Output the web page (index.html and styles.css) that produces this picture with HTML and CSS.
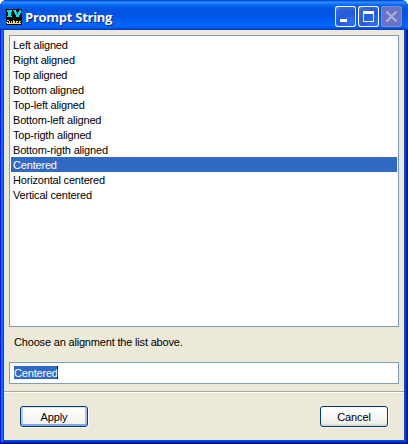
FILE: index.html
```html
<!DOCTYPE html>
<html lang="en">
<head>
<meta charset="utf-8">
<title>Prompt String</title>
<link rel="stylesheet" href="styles.css">
</head>
<body>
<main class="window">
  <header class="titlebar">
    <svg class="app-icon" width="16" height="16" viewBox="0 0 16 16" shape-rendering="crispEdges">
      <path fill="#000" d="M0 0h16v16H0z"/>
      <path fill="#00e5e5" d="M1 1h5v2H5v4h1v1H1V7h1V3H1zM7 1h3v2h1v2h1V3h1V1h2v3h-1v2h-1v2h-3V6H9V4H8V2H7z"/>
      <path fill="#f4ee2c" d="M1 11h2v1H1zM0 13h2v1H0zM3 12h1v2H3zM5 12h1v2H5zM7 11h1v3H7zM8 12h1v2H8zM10 12h2v1h-2zM10 13h1v1h-1zM13 12h2v1h-2zM13 13h1v1h-1zM1 14h14v1H1z"/>
    </svg>
    <h1 class="title">Prompt String</h1>
    <div class="controls">
      <button class="control" aria-label="Minimize"><svg width="21" height="21" viewBox="0 0 21 21"><path fill="#fff" d="M5 13h7v3H5z"/></svg></button>
      <button class="control" aria-label="Maximize"><svg width="21" height="21" viewBox="0 0 21 21"><path fill="#fff" fill-rule="evenodd" d="M5 5h11v11H5zM6 8v7h9V8z"/></svg></button>
      <button class="control control-off" aria-label="Close" disabled><svg width="21" height="21" viewBox="0 0 21 21"><path fill="none" stroke="#aab0df" stroke-width="2.2" d="M5.5 5.5l10 10M15.5 5.5l-10 10"/></svg></button>
    </div>
  </header>
  <section class="content">
    <ul class="list">
      <li>Left aligned</li>
      <li>Right aligned</li>
      <li>Top aligned</li>
      <li>Bottom aligned</li>
      <li>Top-left aligned</li>
      <li>Bottom-left aligned</li>
      <li>Top-rigth aligned</li>
      <li>Bottom-rigth aligned</li>
      <li class="selected">Centered</li>
      <li>Horizontal centered</li>
      <li>Vertical centered</li>
    </ul>
    <p class="prompt">Choose an alignment the list above.</p>
    <div class="field"><span class="selection">Centered</span></div>
  </section>
  <footer class="actions">
    <button class="button button-default">Apply</button>
    <button class="button">Cancel</button>
  </footer>
</main>
</body>
</html>
```
FILE: styles.css
```css
* { box-sizing: border-box; }

body {
  margin: 0;
  background: #fff;
  color: #000;
  font: 11px/15px "Liberation Sans", Arial, sans-serif;
  letter-spacing: -0.18px;
}

.window {
  display: flex;
  flex-direction: column;
  width: 408px;
  height: 444px;
  padding: 0 4px 4px;
  overflow: hidden;
  border-radius: 7px 7px 0 0;
  background: #0046e0;
  box-shadow: inset 1px 0 #0019cf, inset -1px -1px #00138c, inset -2px -2px #001ea0, inset 3px 0 #166aee;
}

.titlebar {
  display: flex;
  align-items: center;
  flex: 0 0 30px;
  margin: 0 -4px;
  padding: 3px 6px 0;
  background: linear-gradient(#0047d4 0, #0058e6 1px, #3b92ff 2px, #2382ff 3px, #0a68f4 5px, #0058e0 8px, #0054e3 14px, #005cf4 20px, #0066ff 25px, #0060fa 27px, #0046d4 29px, #0038b8 30px);
}

.app-icon { display: block; }

.title {
  margin: 0 0 0 3px;
  color: #fff;
  font: bold 13px/18px "Open Sans", "Noto Sans", sans-serif;
  letter-spacing: -0.27px;
  text-shadow: 1px 1px #0a2a8a;
}

.controls {
  display: flex;
  gap: 2px;
  margin-left: auto;
}

.control {
  width: 21px;
  height: 21px;
  padding: 0;
  border: 0;
  border-radius: 3px;
  background: radial-gradient(circle at 75% 80%, #2f70f4 0, #2459dc 45%, #3a68dc 80%, #6e95ee 100%);
  box-shadow: inset 0 0 0 1px #fff;
}

.control svg { display: block; }

.control-off {
  background: #6a74c4;
  box-shadow: inset 0 0 0 1px #8088cc;
}

.content {
  flex: 0 0 361px;
  padding: 5px 5px 0;
  background: #ece9d8;
}

.list {
  height: 292px;
  margin: 0;
  padding: 1px;
  border: 1px solid #7f9db9;
  background: #fff;
  list-style: none;
}

.list li {
  height: 15px;
  padding: 1px 0 0 2px;
  line-height: 14px;
}

.list .selected {
  background: #316ac5;
  color: #fff;
}

.prompt {
  margin: 8px 0 12px 5px;
}

.field {
  display: flex;
  height: 22px;
  padding: 3px 4px;
  border: 1px solid #7f9db9;
  background: #fff;
}

.selection {
  width: 44px;
  height: 13px;
  border-right: 1px solid #000;
  background: #316ac5;
  color: #fff;
  line-height: 14px;
}

.actions {
  display: flex;
  justify-content: space-between;
  flex: 1;
  padding: 14px 16px 0;
  border-top: 1px solid #aca899;
  background: #ece9d8;
  box-shadow: inset 0 1px #fff;
}

.button {
  width: 68px;
  height: 21px;
  padding: 1px 0 0;
  border: 1px solid #003c74;
  border-radius: 3px;
  background: linear-gradient(#fff, #f0f0ea 85%, #d6d0c5);
  box-shadow: 1px 1px #f8f6ee;
  color: #000;
  font: inherit;
  letter-spacing: -0.1px;
}

.button-default {
  background: linear-gradient(#fff, #f0f0ea);
  box-shadow: inset 0 1px #cee7ff, inset 0 -2px #89a4e4, inset 2px 0 #b4cbf2, inset -2px 0 #a8c0f0, 1px 1px #f8f6ee;
}
```
